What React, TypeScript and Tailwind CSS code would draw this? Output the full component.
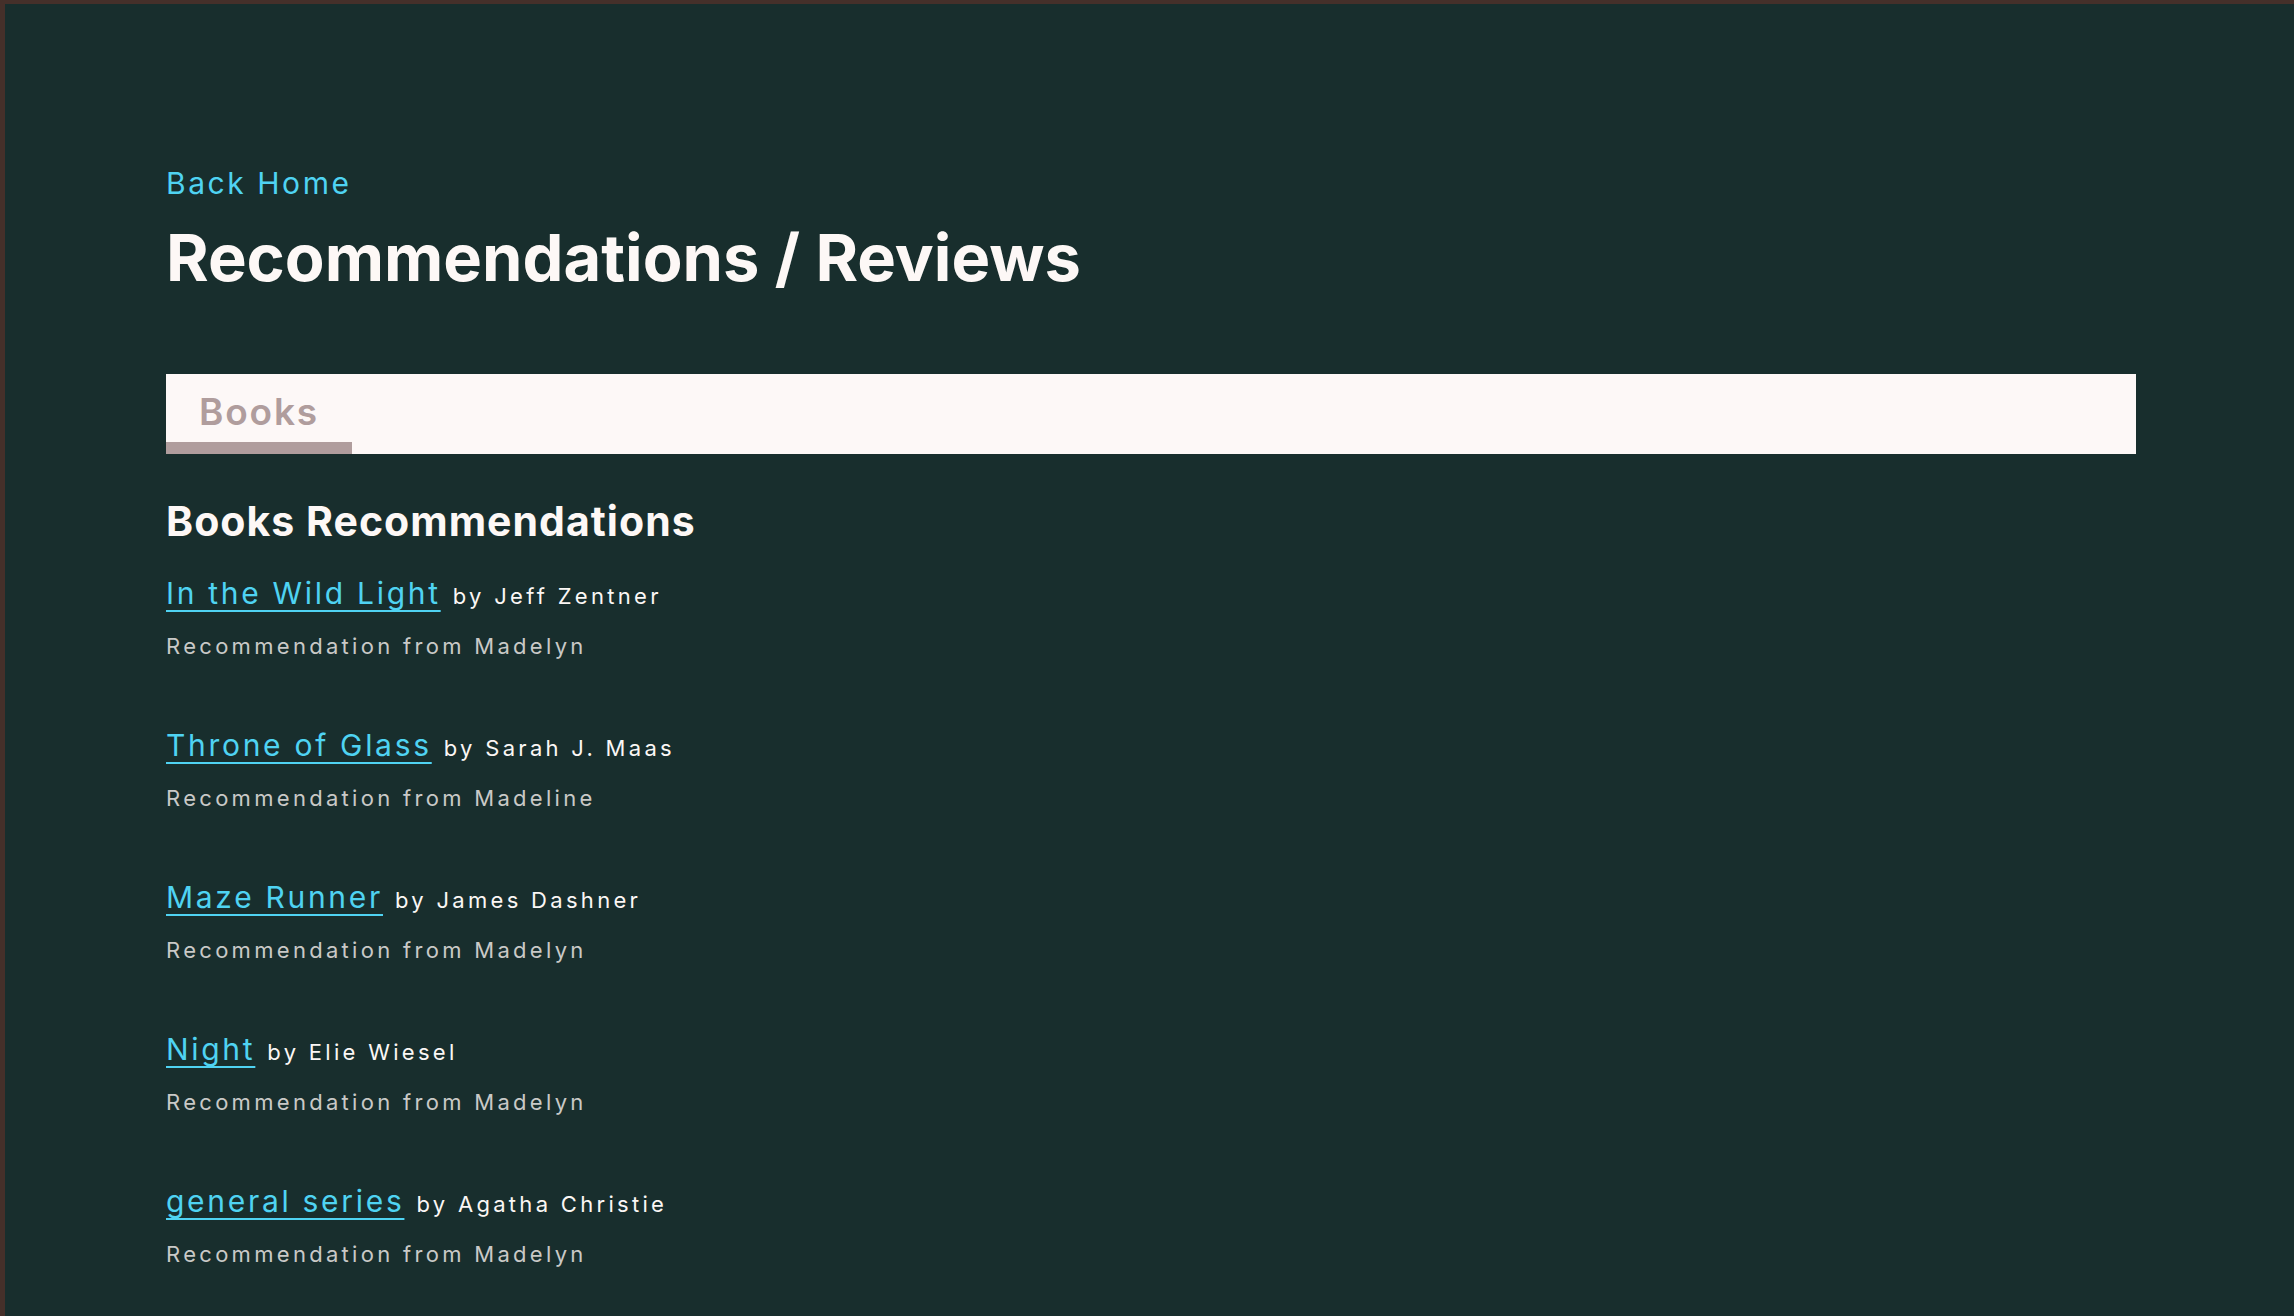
const books = [
  { title: "In the Wild Light", author: "Jeff Zentner", from: "Madelyn" },
  { title: "Throne of Glass", author: "Sarah J. Maas", from: "Madeline" },
  { title: "Maze Runner", author: "James Dashner", from: "Madelyn" },
  { title: "Night", author: "Elie Wiesel", from: "Madelyn" },
  { title: "general series", author: "Agatha Christie", from: "Madelyn" },
];

function BookItem({ book }: { book: (typeof books)[number] }) {
  return (
    <div className="mb-[56px]">
      <p className="leading-[44px]">
        <a
          href="#"
          className="text-[30px] tracking-[0.09em] text-[#4fd3f2] underline decoration-2 underline-offset-[6px]"
        >
          {book.title}
        </a>
        <span className="ml-[12px] text-[22px] tracking-[0.15em] text-[#fbf7f5]">by {book.author}</span>
      </p>
      <p className="mt-[5px] text-[22px] leading-[42px] tracking-[0.15em] text-[#c9c9c7]">
        Recommendation from {book.from}
      </p>
    </div>
  );
}

export default function App() {
  return (
    <div
      className="min-h-screen w-full bg-[#182e2d] border-t-4 border-l-[5px] border-[#45302a]"
      style={{ fontFamily: "Inter, 'Noto Sans', sans-serif" }}
    >
      <div className="pl-[161px] pr-[158px] pt-[157px]">
        {/* HEADER */}
        <a href="#" className="block text-[30px] leading-[45px] tracking-[0.085em] text-[#4fd3f2]">
          Back Home
        </a>
        <h1 className="mt-[12px] text-[65px] leading-[80px] font-bold text-[#fdf8f6]">
          Recommendations / Reviews
        </h1>

        {/* TABS */}
        <div className="mt-[76px] flex h-[80px] items-end bg-[#fdf8f7]">
          <button className="flex h-full w-[186px] flex-col items-center justify-end">
            <span className="mb-[3px] text-[37px] font-semibold tracking-[0.05em] text-[#b09d9d]">
              Books
            </span>
            <span className="h-[12px] w-full bg-[#b09d9d]" />
          </button>
        </div>

        {/* LIST */}
        <h2 className="mt-[37px] text-[41px] leading-[60px] font-bold tracking-[0.025em] text-[#fdf8f6]">
          Books Recommendations
        </h2>
        <div className="mt-[20px]">
          {books.map((book, i) => (
            <BookItem key={`b-${i}`} book={book} />
          ))}
        </div>
      </div>
    </div>
  );
}
